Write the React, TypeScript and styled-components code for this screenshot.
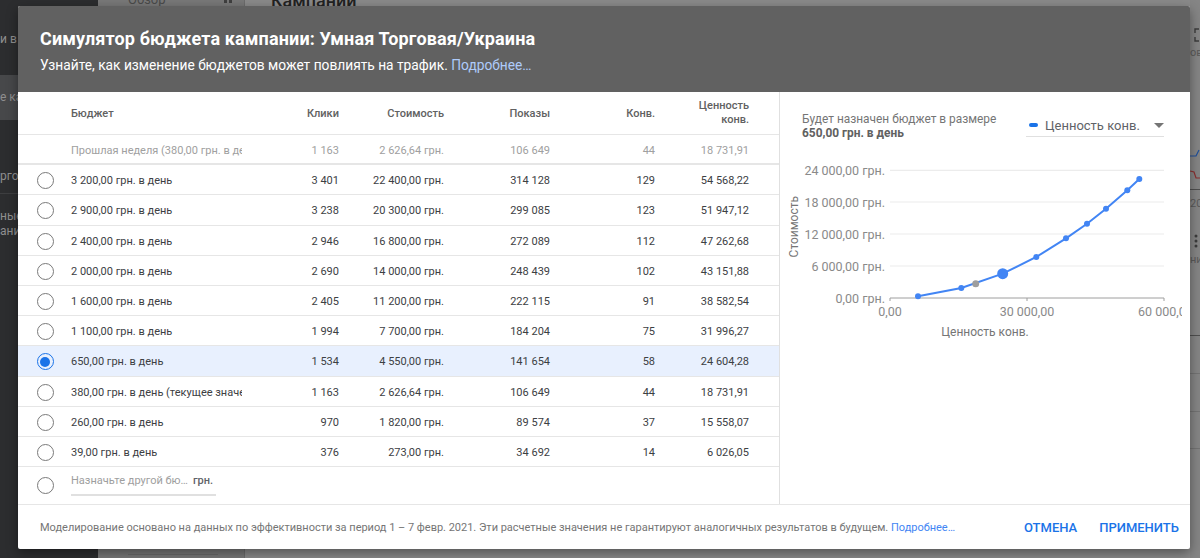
import React from "react"
import styled, { createGlobalStyle } from "styled-components"

const GlobalStyle = createGlobalStyle`
  html, body {
    margin: 0;
    height: 100%;
    overflow: hidden;
    font-family: Roboto, "Liberation Sans", sans-serif;
  }
`

const Page = styled.div`
  position: relative;
  display: flex;
  width: 1200px;
  height: 558px;
  overflow: hidden;
  background: #808080;
`

const Sidebar = styled.aside`
  width: 98px;
  flex: none;
  background: #2c2d2f;
  color: #8f8f8f;
  font-size: 12px;
  padding-top: 32px;
  box-sizing: border-box;
`

const SideItem = styled.div<{ $top?: number }>`
  margin-top: ${(p) => p.$top ?? 0}px;
  line-height: 14px;
  white-space: nowrap;
`

const SideActive = styled.div`
  margin-top: 29px;
  height: 45px;
  line-height: 45px;
  background: #47484a;
  white-space: nowrap;
`

const SideDivider = styled.div`
  height: 1px;
  margin-top: 10px;
  background: #3d3e40;
`

const NavColumn = styled.div`
  width: 147px;
  flex: none;
  display: flex;
  flex-direction: column;
  background: #787878;
  border-right: 1px solid #6c6c6c;
  color: #4a4a4a;
  font-size: 13px;
  line-height: 0;
  padding-left: 30px;
  box-sizing: border-box;
`

const NavTop = styled.div`
  display: flex;
  justify-content: space-between;
  padding-right: 12px;
`

const NavBars = styled.span`
  width: 8px;
  height: 3px;
  background: linear-gradient(90deg, #3f3f3f 0 3px, transparent 3px 5px, #3f3f3f 5px);
`

const NavRule = styled.div`
  width: 90px;
  height: 1px;
  margin-top: auto;
  margin-bottom: 3px;
  background: #6a6a6a;
`

const BackContent = styled.div`
  flex: 1;
  background: #8a8a8a;
  color: #222;
  font-size: 18px;
  font-weight: 500;
  line-height: 2px;
  padding-left: 26px;
`

const RightStrip = styled.div`
  width: 10px;
  flex: none;
  overflow: hidden;
  background: #858585;
  color: #5a5a5a;
  font-size: 11px;
  white-space: nowrap;
`

const StripDrawing = styled.svg<{ $top?: number }>`
  display: block;
  margin-top: ${(p) => p.$top ?? 0}px;
`

const StripLabel = styled.div<{ $top: number }>`
  margin-top: ${(p) => p.$top}px;
  line-height: 12px;
`

const StripRule = styled.div<{ $top: number; $dark?: boolean }>`
  margin-top: ${(p) => p.$top}px;
  height: 1px;
  background: ${(p) => (p.$dark ? "#4f4f4f" : "#737373")};
`

const Dialog = styled.section`
  position: absolute;
  left: 18px;
  top: 6px;
  width: 1172px;
  height: 543px;
  display: flex;
  flex-direction: column;
  background: #fff;
  border-radius: 2px;
  box-shadow: 0 4px 12px rgba(0, 0, 0, 0.4);
  overflow: hidden;
`

const Header = styled.header`
  height: 86px;
  flex: none;
  box-sizing: border-box;
  padding: 21px 22px 0;
  background: #616161;
  color: #fff;
`

const Title = styled.h1`
  margin: 0;
  font-size: 18px;
  line-height: 24px;
  font-weight: 700;
  letter-spacing: 0.14px;
`

const Subtitle = styled.p`
  margin: 5px 0 0;
  font-size: 13.75px;
  line-height: 18px;
`

const HeaderLink = styled.a`
  color: #aecbfa;
`

const Body = styled.div`
  flex: 1;
  display: flex;
  min-height: 0;
`

const TableWrap = styled.div`
  width: 761px;
  flex: none;
  border-right: 1px solid #e0e0e0;
`

type RowKind = "head" | "muted" | "selected" | "input"

const rowHeight = (kind?: RowKind) => {
  if (kind === "head") return "43px"
  if (kind === "input") return "37px"
  return "30.2px"
}

const Row = styled.div<{ $kind?: RowKind }>`
  display: grid;
  grid-template-columns: 53px 171px 97px 105px 106px 105px 94px 30px;
  align-items: center;
  box-sizing: border-box;
  height: ${(p) => rowHeight(p.$kind)};
  padding-top: ${(p) => (p.$kind === "head" || p.$kind === "input" ? "0" : "2px")};
  border-bottom: ${(p) => (p.$kind === "input" ? "0" : "1px solid #e6e6e6")};
  border-bottom-width: ${(p) => (p.$kind === "muted" ? "2px" : "1px")};
  background: ${(p) => (p.$kind === "selected" ? "#e8f0fe" : "#fff")};
  font-size: 11px;
  font-weight: ${(p) => (p.$kind === "head" ? 500 : 400)};
  color: ${(p) => (p.$kind === "head" ? "#616161" : p.$kind === "muted" ? "#a0a0a0" : "#3c4043")};
`

const Cell = styled.div`
  text-align: right;
  line-height: 15px;
`

const ValueCell = styled(Cell)`
  justify-self: end;
  width: 60px;
  line-height: 14px;
`

const BudgetCell = styled.div`
  grid-column: 2;
  overflow: hidden;
  white-space: nowrap;
`

const Radio = styled.span<{ $checked?: boolean }>`
  grid-column: 1;
  margin-left: 18.5px;
  width: 17px;
  height: 17px;
  box-sizing: border-box;
  border-radius: 50%;
  border: 1.75px solid ${(p) => (p.$checked ? "#1a73e8" : "#7a7a7a")};
  display: flex;
  align-items: center;
  justify-content: center;
  &::after {
    content: "";
    display: ${(p) => (p.$checked ? "block" : "none")};
    width: 10px;
    height: 10px;
    border-radius: 50%;
    background: #1a73e8;
  }
`

const BudgetInput = styled.div`
  grid-column: 2;
  align-self: start;
  margin-top: 6px;
  width: 145px;
  height: 23px;
  box-sizing: border-box;
  border-bottom: 2px solid #e0e0e0;
  display: flex;
  gap: 5px;
  line-height: 15px;
  white-space: nowrap;
`

const Placeholder = styled.span`
  color: #9e9e9e;
`

const Unit = styled.span`
  font-weight: 500;
  color: #5f6368;
`

const ChartPanel = styled.div`
  flex: 1;
  min-width: 0;
  padding: 20px 26px 0 22px;
`

const PanelHead = styled.div`
  display: flex;
  justify-content: space-between;
  align-items: flex-start;
`

const Caption = styled.div`
  font-size: 11.9px;
  line-height: 14px;
  color: #757575;
`

const CaptionBold = styled.div`
  font-weight: 700;
  color: #616161;
`

const Select = styled.div`
  width: 138px;
  height: 25px;
  box-sizing: border-box;
  padding-top: 2px;
  border-bottom: 1px solid #e0e0e0;
  display: flex;
  align-items: center;
  font-size: 13px;
  color: #5f6368;
`

const LegendMark = styled.span`
  width: 9px;
  height: 4px;
  border-radius: 2px;
  background: #1a73e8;
  margin: 0 7px 0 3px;
`

const Caret = styled.span`
  margin-left: auto;
  border-left: 5px solid transparent;
  border-right: 5px solid transparent;
  border-top: 5px solid #757575;
`

const ChartSvg = styled.svg`
  display: block;
  margin: 0 0 0 -22px;
  font-family: Roboto, "Liberation Sans", sans-serif;
`

const Footer = styled.footer`
  height: 45px;
  flex: none;
  box-sizing: border-box;
  border-top: 1px solid #e6e6e6;
  display: flex;
  align-items: center;
  padding: 0 0 0 22px;
  font-size: 11px;
  letter-spacing: -0.013px;
  color: #757575;
`

const FooterLink = styled.a`
  color: #4285f4;
`

const Actions = styled.div`
  margin-left: auto;
  display: flex;
  gap: 22px;
  padding-right: 11px;
`

const ActionButton = styled.button`
  border: 0;
  padding: 0;
  background: none;
  font: 500 13px Roboto, "Liberation Sans", sans-serif;
  color: #1a73e8;
`

const rows = [
  ["3 200,00 грн. в день", "3 401", "22 400,00 грн.", "314 128", "129", "54 568,22"],
  ["2 900,00 грн. в день", "3 238", "20 300,00 грн.", "299 085", "123", "51 947,12"],
  ["2 400,00 грн. в день", "2 946", "16 800,00 грн.", "272 089", "112", "47 262,68"],
  ["2 000,00 грн. в день", "2 690", "14 000,00 грн.", "248 439", "102", "43 151,88"],
  ["1 600,00 грн. в день", "2 405", "11 200,00 грн.", "222 115", "91", "38 582,54"],
  ["1 100,00 грн. в день", "1 994", "7 700,00 грн.", "184 204", "75", "31 996,27"],
  ["650,00 грн. в день", "1 534", "4 550,00 грн.", "141 654", "58", "24 604,28"],
  ["380,00 грн. в день (текущее значение)", "1 163", "2 626,64 грн.", "106 649", "44", "18 731,91"],
  ["260,00 грн. в день", "970", "1 820,00 грн.", "89 574", "37", "15 558,07"],
  ["39,00 грн. в день", "376", "273,00 грн.", "34 692", "14", "6 026,05"],
]

// chart coordinates are relative to the panel's left edge and the svg top
const points = [
  [138, 156.3], [181.3, 148], [222.7, 133.7], [256.3, 117], [286, 98.3],
  [307, 83.7], [326, 68.7], [347.3, 50.3], [359.3, 39],
]
const yLabels = [
  ["24 000,00 грн.", 30.3], ["18 000,00 грн.", 62], ["12 000,00 грн.", 94], ["6 000,00 грн.", 126], ["0,00 грн.", 158],
] as const

function Chart() {
  return (
    <ChartSvg width="402" height="205" viewBox="0 0 402 205">
      {yLabels.slice(0, 4).map(([, y]) => (
        <line key={y} x1="110" x2="384" y1={y} y2={y} stroke="#ececec" strokeWidth="1.2" />
      ))}
      <line x1="110" x2="384" y1="158" y2="158" stroke="#9e9e9e" />
      {[110, 247, 384].map((x) => (
        <line key={x} x1={x} x2={x} y1="158" y2="161" stroke="#9e9e9e" />
      ))}
      {yLabels.map(([label, y]) => (
        <text key={label} x="105" y={y + 5} textAnchor="end" fontSize="12.5" fill="#8a8a8a">
          {label}
        </text>
      ))}
      <text x="110" y="176" textAnchor="middle" fontSize="12.5" fill="#8a8a8a">0,00</text>
      <text x="247" y="176" textAnchor="middle" fontSize="12.5" fill="#8a8a8a">30 000,00</text>
      <text x="358" y="176" fontSize="12.5" fill="#8a8a8a">60 000,00</text>
      <text x="205" y="196" textAnchor="middle" fontSize="12" fill="#757575">Ценность конв.</text>
      <text transform="translate(18 86.7) rotate(-90)" textAnchor="middle" fontSize="12" fill="#757575">Стоимость</text>
      <polyline points={points.map((p) => p.join(",")).join(" ")} fill="none" stroke="#4285f4" strokeWidth="2" />
      {points.map(([x, y]) => (
        <circle key={x} cx={x} cy={y} r="3" fill="#4285f4" />
      ))}
      <circle cx="195.7" cy="143.7" r="3.5" fill="#9e9e9e" />
      <circle cx="222.7" cy="133.7" r="5.5" fill="#4285f4" />
    </ChartSvg>
  )
}

export default function App() {
  return (
    <Page>
      <GlobalStyle />
      <Sidebar>
        <SideItem>и в кампании</SideItem>
        <SideActive>е кампании</SideActive>
        <SideItem $top={49}>рговая</SideItem>
        <SideDivider />
        <SideItem $top={15}>ные</SideItem>
        <SideItem $top={1}>ании</SideItem>
      </Sidebar>
      <NavColumn>
        <NavTop>
          Обзор
          <NavBars />
        </NavTop>
        <NavRule />
      </NavColumn>
      <BackContent>Кампании</BackContent>
      <RightStrip>
        <StripDrawing width="10" height="42" viewBox="0 0 10 42">
          <path d="M5 33V29h4M5 37v4h4" fill="none" stroke="#3c3c3c" strokeWidth="1.4" />
        </StripDrawing>
        <StripLabel $top={5}>ове</StripLabel>
        <StripDrawing width="10" height="130" viewBox="0 0 10 130">
          <path d="M0 97h6l3-6" fill="none" stroke="#1f4f9a" strokeWidth="1.2" />
          <path d="M0 112l4 1 2 6h4" fill="none" stroke="#8c2f2f" strokeWidth="1.2" />
        </StripDrawing>
        <StripRule $top={0} $dark />
        <StripLabel $top={8}>202</StripLabel>
        <StripDrawing width="10" height="24" viewBox="0 0 10 24" $top={24}>
          <circle cx="6" cy="2" r="1.5" fill="#3c3c3c" />
          <circle cx="6" cy="7" r="1.5" fill="#3c3c3c" />
          <circle cx="6" cy="12" r="1.5" fill="#3c3c3c" />
        </StripDrawing>
        <StripLabel $top={-4}>ни</StripLabel>
        <StripRule $top={69} $dark />
        <StripRule $top={37} />
        <StripRule $top={37} />
        <StripRule $top={36} />
      </RightStrip>
      <Dialog>
        <Header>
          <Title>Симулятор бюджета кампании: Умная Торговая/Украина</Title>
          <Subtitle>
            Узнайте, как изменение бюджетов может повлиять на трафик.{" "}
            <HeaderLink>Подробнее…</HeaderLink>
          </Subtitle>
        </Header>
        <Body>
          <TableWrap>
            <Row $kind="head">
              <BudgetCell>Бюджет</BudgetCell>
              <Cell>Клики</Cell>
              <Cell>Стоимость</Cell>
              <Cell>Показы</Cell>
              <Cell>Конв.</Cell>
              <ValueCell>Ценность конв.</ValueCell>
            </Row>
            <Row $kind="muted">
              <BudgetCell>Прошлая неделя (380,00 грн. в день)</BudgetCell>
              <Cell>1 163</Cell>
              <Cell>2 626,64 грн.</Cell>
              <Cell>106 649</Cell>
              <Cell>44</Cell>
              <Cell>18 731,91</Cell>
            </Row>
            {rows.map((r) => (
              <Row key={r[0]} $kind={r[0].startsWith("650") ? "selected" : undefined}>
                <Radio $checked={r[0].startsWith("650")} />
                <BudgetCell>{r[0]}</BudgetCell>
                {r.slice(1).map((v, i) => (
                  <Cell key={i}>{v}</Cell>
                ))}
              </Row>
            ))}
            <Row $kind="input">
              <Radio />
              <BudgetInput>
                <Placeholder>Назначьте другой бю…</Placeholder>
                <Unit>грн.</Unit>
              </BudgetInput>
            </Row>
          </TableWrap>
          <ChartPanel>
            <PanelHead>
              <Caption>
                Будет назначен бюджет в размере
                <CaptionBold>650,00 грн. в день</CaptionBold>
              </Caption>
              <Select>
                <LegendMark />
                Ценность конв.
                <Caret />
              </Select>
            </PanelHead>
            <Chart />
          </ChartPanel>
        </Body>
        <Footer>
          <span>
            Моделирование основано на данных по эффективности за период 1 – 7 февр. 2021. Эти расчетные значения не гарантируют аналогичных результатов в будущем.{" "}
            <FooterLink>Подробнее…</FooterLink>
          </span>
          <Actions>
            <ActionButton>ОТМЕНА</ActionButton>
            <ActionButton>ПРИМЕНИТЬ</ActionButton>
          </Actions>
        </Footer>
      </Dialog>
    </Page>
  )
}
